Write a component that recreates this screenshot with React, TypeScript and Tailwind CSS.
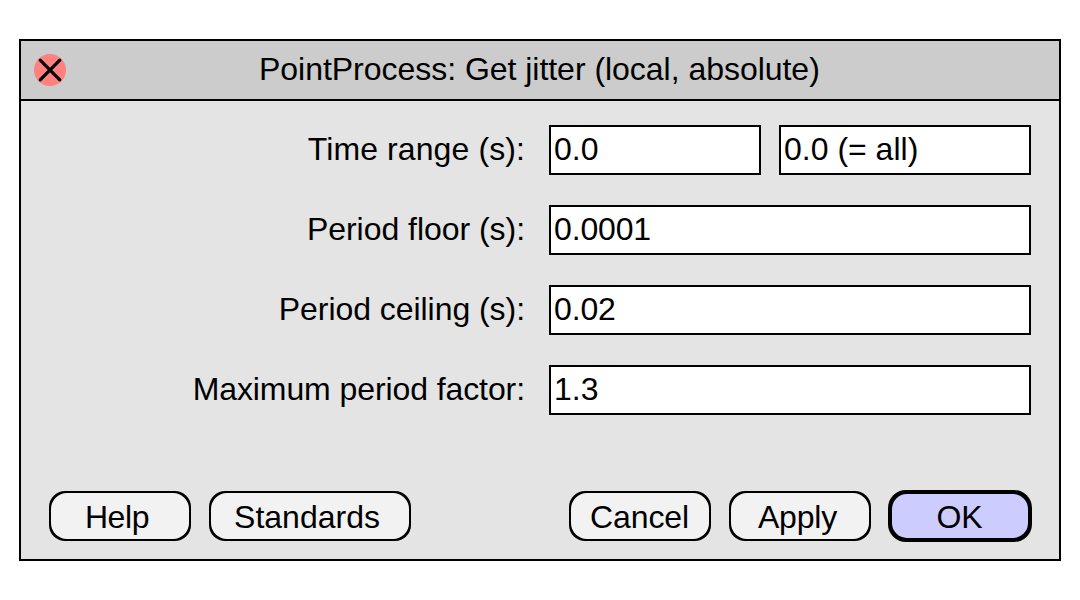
import React from 'react';

const inputClass = "h-[50px] min-w-0 rounded-none border-2 border-black bg-white pt-0 pb-0.5 pl-[3px] pr-0 text-[32px] leading-none text-black outline-none";

function Row({ label, labelClass, children }: { label: string; labelClass: string; children: React.ReactNode }) {
  return (
    <div className="flex h-[50px] items-center">
      <label className={"w-[504px] pb-0.5 text-right leading-none whitespace-nowrap " + labelClass}>{label}</label>
      <div className="ml-6 flex w-[482px] gap-[18px]">{children}</div>
    </div>
  );
}

function DialogButton({ className, textClass, children }: { className: string; textClass: string; children: string }) {
  return (
    <button className={"flex h-[50px] shrink-0 rounded-[16px] bg-black p-0.5 text-[32px] leading-none " + className}>
      <span className={"flex h-full w-full items-center justify-center rounded-[16px] bg-[#f2f2f2] pt-px " + textClass}>{children}</span>
    </button>
  );
}

export default function App() {
  return (
    <main className="h-[600px] w-[1080px] bg-white pt-[39px] pl-[19px] font-['Liberation_Sans',Arial,sans-serif] text-[32px] text-black">
      <section className="flex h-[522px] w-[1042px] flex-col border-2 border-black bg-[#e4e4e4]">
        <header className="flex h-[60px] shrink-0 items-center border-b-2 border-black bg-[#cccccc] pl-[13px]">
          <button aria-label="Close" className="size-8 shrink-0">
            <svg viewBox="0 0 32 32" className="size-8">
              <circle cx="16" cy="16" r="16" fill="#ff8080" />
              <path d="M6.2 6.2 25.8 25.8M25.8 6.2 6.2 25.8" stroke="black" strokeWidth="3.2" strokeLinecap="round" />
            </svg>
          </button>
          <h1 className="ml-[193px] pb-0.5 leading-none tracking-[-0.03px] whitespace-nowrap">PointProcess: Get jitter (local, absolute)</h1>
        </header>
        <div className="flex flex-col gap-[30px] pt-6">
          <Row label="Time range (s):" labelClass="tracking-[0.1px]">
            <input className={inputClass + " w-[212px]"} defaultValue="0.0" />
            <input className={inputClass + " w-[252px]"} defaultValue="0.0 (= all)" />
          </Row>
          <Row label="Period floor (s):" labelClass="tracking-[-0.04px]">
            <input className={inputClass + " w-full tracking-[-0.15px]"} defaultValue="0.0001" />
          </Row>
          <Row label="Period ceiling (s):" labelClass="tracking-[-0.05px]">
            <input className={inputClass + " w-full tracking-[-0.15px]"} defaultValue="0.02" />
          </Row>
          <Row label="Maximum period factor:" labelClass="tracking-[-0.09px]">
            <input className={inputClass + " w-full"} defaultValue="1.3" />
          </Row>
        </div>
        <footer className="mt-[75px] flex h-[52px] items-center pl-7">
          <DialogButton className="w-[142px]" textClass="pr-[6px] tracking-[-0.4px]">Help</DialogButton>
          <DialogButton className="ml-[18px] w-[202px]" textClass="pr-[6px]">Standards</DialogButton>
          <DialogButton className="ml-[158px] w-[142px]" textClass="pr-px tracking-[-0.1px]">Cancel</DialogButton>
          <DialogButton className="ml-[18px] w-[142px]" textClass="pr-[5px] tracking-[-0.2px]">Apply</DialogButton>
          <button className="ml-[17px] flex h-[52px] w-[144px] shrink-0 rounded-[18px] bg-black p-1 text-[32px] leading-none">
            <span className="flex h-full w-full items-center justify-center rounded-[15px] bg-[#ccccff] pt-px pr-px">OK</span>
          </button>
        </footer>
      </section>
    </main>
  );
}
